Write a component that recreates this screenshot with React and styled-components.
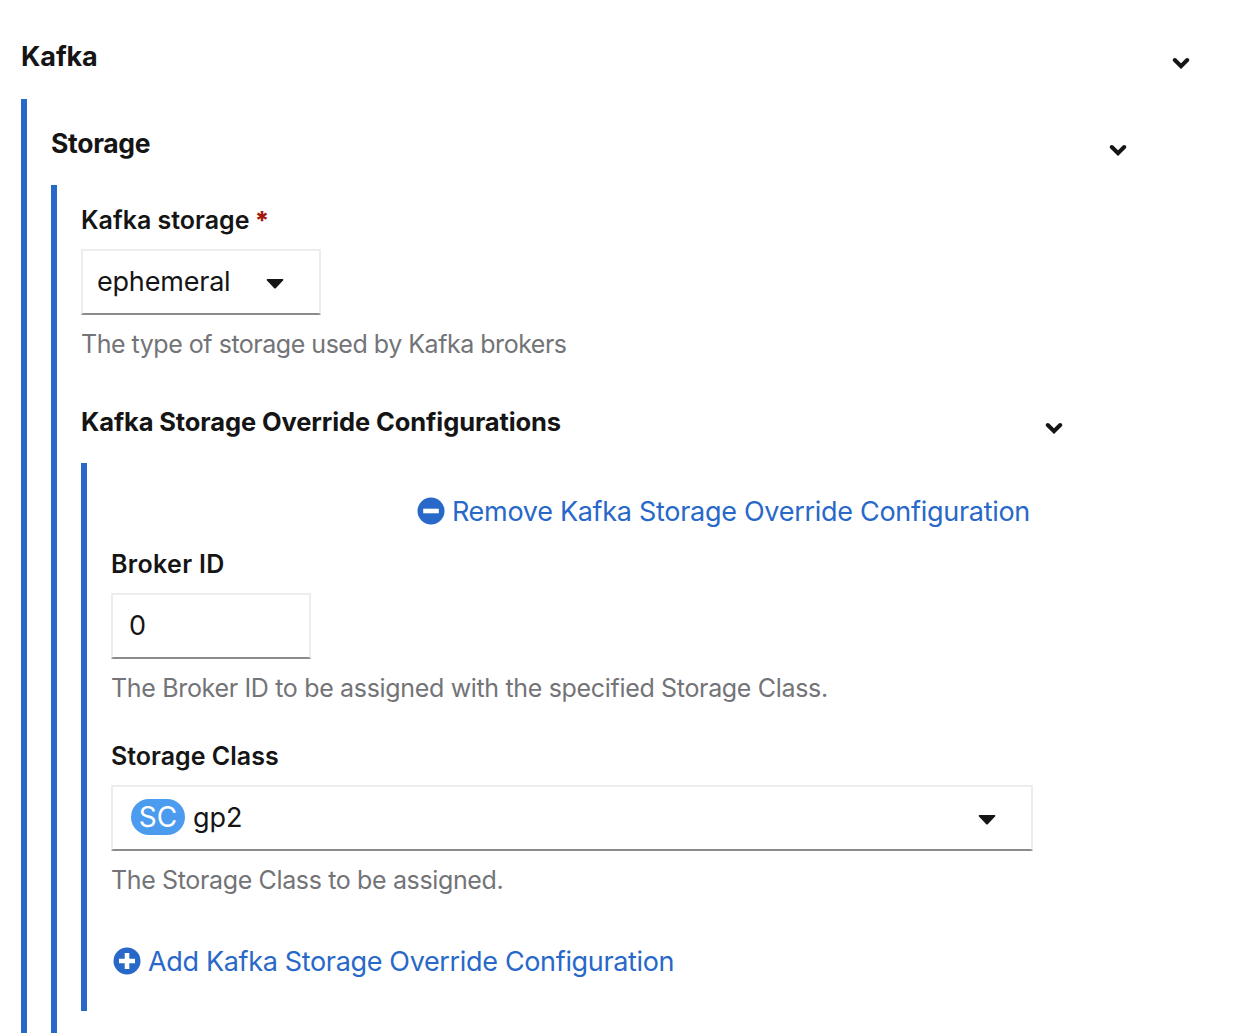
import React from "react";
import styled, { createGlobalStyle } from "styled-components";

const GlobalStyle = createGlobalStyle`
  *, *::before, *::after { box-sizing: border-box; }
  body {
    margin: 0;
    background: #fff;
    color: #151515;
    font-family: Inter, "Liberation Sans", sans-serif;
  }
`;

const Page = styled.main`
  height: 1033px;
  padding: 13px 49px 0 21px;
  overflow: hidden;
`;

const SectionHeader = styled.header`
  display: flex;
  align-items: center;
  justify-content: space-between;
  height: 86px;
  padding-top: 3px;
`;

const SectionTitle = styled.h2`
  margin: 0;
  padding-bottom: ${(p) => p.$lift || 0}px;
  font-size: ${(p) => p.$size}px;
  font-weight: 700;
  line-height: 38px;
  letter-spacing: ${(p) => p.$track || 0}px;
`;

const ChevronIcon = styled.svg`
  width: 18px;
  height: 12px;
  margin-top: ${(p) => p.$drop}px;
  fill: none;
  stroke: #151515;
  stroke-width: 4;
  stroke-linecap: round;
`;

const SectionBody = styled.div`
  height: ${(p) => (p.$height ? `${p.$height}px` : "auto")};
  min-height: ${(p) => p.$minHeight || 0}px;
  padding: ${(p) => p.$top || 0}px ${(p) => p.$right}px 0 24px;
  border-left: 6px solid #2768c9;
`;

const Field = styled.div`
  display: flex;
  flex-direction: column;
  align-items: flex-start;
  gap: 10px;
  margin-bottom: ${(p) => p.$after || 0}px;
`;

const Label = styled.label`
  font-size: 25px;
  font-weight: 600;
  line-height: 38px;
  letter-spacing: ${(p) => p.$track || 0}px;
`;

const Required = styled.span`
  margin-left: -1px;
  color: #a1190b;
  font-weight: 800;
`;

const HelpText = styled.p`
  margin: 0;
  color: #737477;
  font-size: 25px;
  line-height: 38px;
  letter-spacing: ${(p) => p.$track || 0}px;
  white-space: nowrap;
`;

const Control = styled.div`
  display: flex;
  align-items: center;
  justify-content: space-between;
  width: ${(p) => p.$width}px;
  height: 66px;
  padding: 0 ${(p) => p.$right || 0}px 2px ${(p) => p.$left}px;
  border: 2px solid #ededed;
  border-bottom-color: #8a8d90;
  font-size: 27px;
  font-weight: 370;
  letter-spacing: ${(p) => p.$track || 0}px;
`;

const CaretIcon = styled.svg`
  width: 18px;
  height: 10px;
  margin-top: 6px;
  fill: #151515;
`;

const Resource = styled.span`
  display: flex;
  align-items: center;
  gap: 8px;
`;

const Badge = styled.span`
  width: 54px;
  height: 36px;
  border-radius: 18px;
  background: #4b9bee;
  color: #fff;
  font-size: 28px;
  font-weight: 400;
  line-height: 36px;
  text-align: center;
`;

const LinkButton = styled.button`
  display: flex;
  align-items: center;
  gap: 7px;
  height: 42px;
  margin: 0 ${(p) => (p.$end ? "1px 13px auto" : "0 0 2px")};
  padding: 0;
  border: 0;
  background: none;
  color: #2768c9;
  font: 400 27px/40px Inter, "Liberation Sans", sans-serif;
  letter-spacing: ${(p) => p.$track}px;
  white-space: nowrap;
`;

const LinkText = styled.span`
  padding-top: 2px;
`;

const CircleIcon = styled.svg`
  width: 28px;
  height: 28px;
  flex: none;
`;

const Chevron = ({ drop }) => (
  <ChevronIcon viewBox="0 0 18 12" $drop={drop}>
    <path d="M2.8 3 L9 9.2 L15.2 3" />
  </ChevronIcon>
);

const Caret = () => (
  <CaretIcon viewBox="0 0 18 10">
    <path d="M1.2 0 H16.8 Q18 .5 17 1.6 L10 9 Q9 10 8 9 L1 1.6 Q0 .5 1.2 0 Z" />
  </CaretIcon>
);

const CircleSign = ({ plus }) => (
  <CircleIcon viewBox="0 0 28 28">
    <circle cx="14" cy="14" r="13.5" fill="#2768c9" />
    <path d={plus ? "M6 14 H22 M14 6 V22" : "M6.2 14 H21.8"} stroke="#fff" strokeWidth="4.6" />
  </CircleIcon>
);

function Section({ title, size, track, lift, drop = 12, children, ...body }) {
  return (
    <section>
      <SectionHeader>
        <SectionTitle $size={size} $track={track} $lift={lift}>{title}</SectionTitle>
        <Chevron drop={drop} />
      </SectionHeader>
      <SectionBody {...body}>{children}</SectionBody>
    </section>
  );
}

export default function App() {
  return (
    <>
      <GlobalStyle />
      <Page>
        <Section title="Kafka" size={27} track={-0.1} lift={1} drop={10} $right={63} $minHeight={940}>
          <Section title="Storage" size={26.5} track={-0.3} lift={2} $right={64} $top={16} $minHeight={860}>
            <Field $after={14}>
              <Label>
                Kafka storage <Required>*</Required>
              </Label>
              <Control $width={240} $left={14} $right={35} $track={-0.2}>
                ephemeral
                <Caret />
              </Control>
              <HelpText $track={-0.48}>The type of storage used by Kafka brokers</HelpText>
            </Field>
            <Section
              title="Kafka Storage Override Configurations"
              size={25.5}
              track={-0.11}
              $right={32}
              $top={27}
              $height={548}
            >
              <LinkButton $end $track={-0.29}>
                <CircleSign />
                <LinkText>Remove Kafka Storage Override Configuration</LinkText>
              </LinkButton>
              <Field $after={30}>
                <Label $track={0.32}>Broker ID</Label>
                <Control $width={200} $left={16}>0</Control>
                <HelpText $track={-0.33}>
                  The Broker ID to be assigned with the specified Storage Class.
                </HelpText>
              </Field>
              <Field $after={41}>
                <Label>Storage Class</Label>
                <Control $width={922} $left={18} $right={35}>
                  <Resource>
                    <Badge>SC</Badge>
                    gp2
                  </Resource>
                  <Caret />
                </Control>
                <HelpText $track={-0.36}>The Storage Class to be assigned.</HelpText>
              </Field>
              <LinkButton $track={-0.34}>
                <CircleSign plus />
                <LinkText>Add Kafka Storage Override Configuration</LinkText>
              </LinkButton>
            </Section>
          </Section>
        </Section>
      </Page>
    </>
  );
}
